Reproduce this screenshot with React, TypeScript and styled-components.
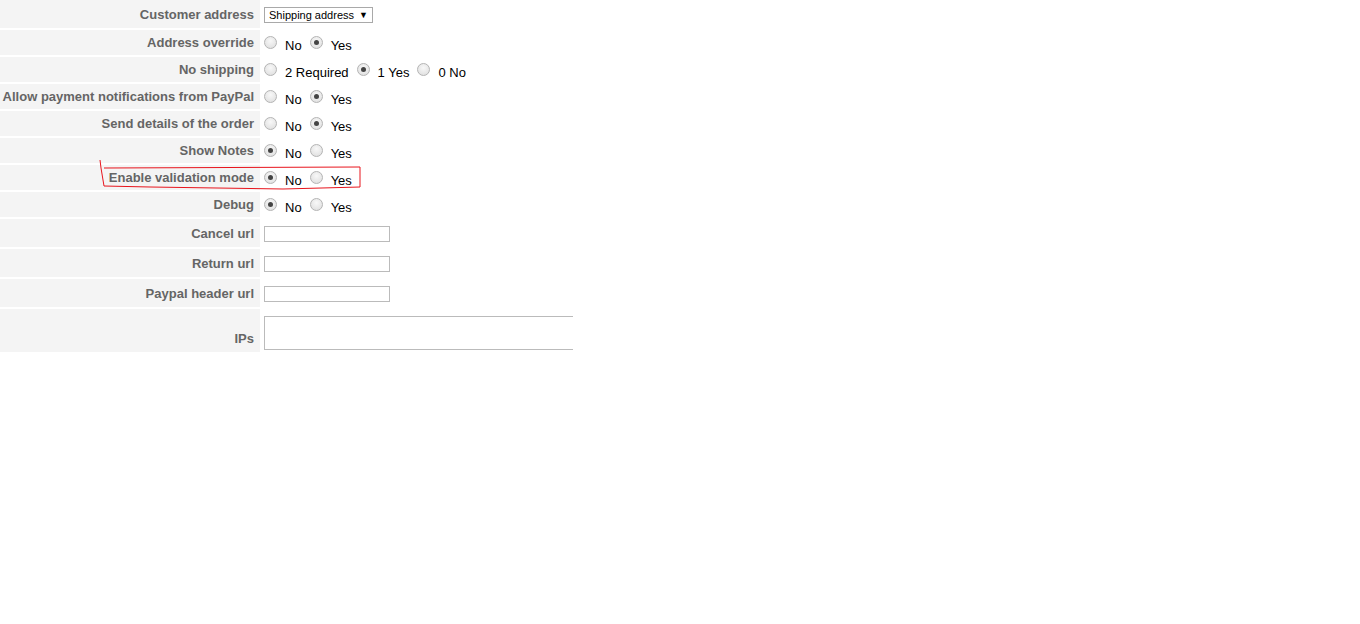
import React from 'react';
import styled, { createGlobalStyle } from 'styled-components';

const GlobalStyle = createGlobalStyle`
  html, body {
    margin: 0;
    padding: 0;
    background: #fff;
    font-family: 'Liberation Sans', Arial, sans-serif;
  }
`;

const Page = styled.div`
  position: relative;
  width: 1360px;
  min-height: 624px;
`;

const Form = styled.div`
  display: flex;
  flex-direction: column;
  gap: 2px;
  width: 573px;
`;

const Row = styled.div<{ h: number }>`
  display: grid;
  grid-template-columns: 260px 1fr;
  column-gap: 2px;
  height: ${p => p.h}px;
`;

const Label = styled.div<{ bottom?: boolean }>`
  background: #f4f4f4;
  display: flex;
  justify-content: flex-end;
  align-items: ${p => (p.bottom ? 'flex-end' : 'center')};
  padding: 0 6px ${p => (p.bottom ? '6px' : '0')} 0;
  font-size: 13px;
  font-weight: bold;
  color: #656565;
  white-space: nowrap;
`;

const Value = styled.div<{ bottom?: boolean }>`
  display: flex;
  align-items: ${p => (p.bottom ? 'flex-end' : 'center')};
  padding-left: 2px;
  padding-bottom: ${p => (p.bottom ? '2px' : '0')};
  overflow: hidden;
`;

const Select = styled.div`
  box-sizing: border-box;
  width: 109px;
  height: 16px;
  border: 1px solid #a9a9a9;
  display: flex;
  align-items: center;
  justify-content: space-between;
  padding: 0 4px 0 4px;
  font-size: 11px;
  color: #000;
  margin-top: 2px;
`;

const Caret = styled.span`
  font-size: 9px;
`;

const Option = styled.label`
  display: inline-flex;
  align-items: center;
  margin-right: 8px;
`;

const Radio = styled.span<{ checked?: boolean }>`
  box-sizing: border-box;
  width: 13px;
  height: 13px;
  border-radius: 50%;
  border: 1px solid #b4b4b4;
  background: radial-gradient(circle at 50% 35%, #f8f8f8 0%, #dcdcdc 100%);
  display: inline-flex;
  align-items: center;
  justify-content: center;
  margin-right: 8px;

  &::after {
    content: '';
    width: 5px;
    height: 5px;
    border-radius: 50%;
    background: ${p => (p.checked ? '#444' : 'transparent')};
  }
`;

const OptionText = styled.span`
  font-size: 13px;
  color: #000;
  margin-top: 5px;
`;

const TextInput = styled.div`
  box-sizing: border-box;
  width: 126px;
  height: 16px;
  border: 1px solid #bbb;
  background: #fff;
  margin-top: 2px;
`;

const TextArea = styled.div`
  box-sizing: border-box;
  width: 340px;
  height: 34px;
  flex-shrink: 0;
  border: 1px solid #bbb;
  background: #fff;
`;

const Annotation = styled.svg`
  position: absolute;
  left: 0;
  top: 0;
  pointer-events: none;
`;

type Opt = { text: string; checked?: boolean };

const radioRows: { label: string; options: Opt[] }[] = [
  { label: 'Address override', options: [{ text: 'No' }, { text: 'Yes', checked: true }] },
  {
    label: 'No shipping',
    options: [{ text: '2 Required' }, { text: '1 Yes', checked: true }, { text: '0 No' }],
  },
  { label: 'Allow payment notifications from PayPal', options: [{ text: 'No' }, { text: 'Yes', checked: true }] },
  { label: 'Send details of the order', options: [{ text: 'No' }, { text: 'Yes', checked: true }] },
  { label: 'Show Notes', options: [{ text: 'No', checked: true }, { text: 'Yes' }] },
  { label: 'Enable validation mode', options: [{ text: 'No', checked: true }, { text: 'Yes' }] },
  { label: 'Debug', options: [{ text: 'No', checked: true }, { text: 'Yes' }] },
];

const urlRows = ['Cancel url', 'Return url', 'Paypal header url'];

export default function App() {
  return (
    <Page>
      <GlobalStyle />
      <Form>
        <Row h={28}>
          <Label>Customer address</Label>
          <Value>
            <Select>
              <span>Shipping address</span>
              <Caret>▼</Caret>
            </Select>
          </Value>
        </Row>
        {radioRows.map(r => (
          <Row h={25} key={r.label}>
            <Label>{r.label}</Label>
            <Value>
              {r.options.map(o => (
                <Option key={o.text}>
                  <Radio checked={o.checked} />
                  <OptionText>{o.text}</OptionText>
                </Option>
              ))}
            </Value>
          </Row>
        ))}
        {urlRows.map(u => (
          <Row h={28} key={u}>
            <Label>{u}</Label>
            <Value>
              <TextInput />
            </Value>
          </Row>
        ))}
        <Row h={43}>
          <Label bottom>IPs</Label>
          <Value bottom>
            <TextArea />
          </Value>
        </Row>
      </Form>
      <Annotation width="400" height="200">
        <path
          d="M100 160 L101 168 L104 186 L150 187 L283 189 L360 187 L360 167 L104 168"
          fill="none"
          stroke="#e8141c"
          strokeWidth="1"
        />
      </Annotation>
    </Page>
  );
}
